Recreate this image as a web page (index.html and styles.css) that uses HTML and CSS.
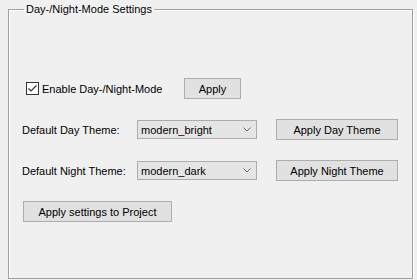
FILE: index.html
```html
<!DOCTYPE html>
<html lang="en">
<head>
  <meta charset="UTF-8" />
  <title>Day-/Night-Mode Settings</title>
  <link rel="stylesheet" href="styles.css">
</head>
<body>

  <fieldset class="group">
    <legend>Day-/Night-Mode Settings</legend>

    <div class="row row-enable">
      <label class="check">
        <span class="box">
          <svg width="11" height="11" viewBox="0 0 11 11"><path d="M1.5 5.5 L4 8 L9.5 2.5" fill="none" stroke="#333" stroke-width="1.2"/></svg>
        </span>
        Enable Day-/Night-Mode
      </label>
      <button class="btn btn-apply">Apply</button>
    </div>

    <div class="row">
      <span class="label">Default Day Theme:</span>
      <div class="combo">
        <span>modern_bright</span>
        <svg width="8" height="5" viewBox="0 0 8 5"><path d="M0.5 0.5 L4 4 L7.5 0.5" fill="none" stroke="#666" stroke-width="1"/></svg>
      </div>
      <button class="btn btn-theme">Apply Day Theme</button>
    </div>

    <div class="row">
      <span class="label">Default Night Theme:</span>
      <div class="combo">
        <span>modern_dark</span>
        <svg width="8" height="5" viewBox="0 0 8 5"><path d="M0.5 0.5 L4 4 L7.5 0.5" fill="none" stroke="#666" stroke-width="1"/></svg>
      </div>
      <button class="btn btn-theme">Apply Night Theme</button>
    </div>

    <div class="row">
      <button class="btn btn-project">Apply settings to Project</button>
    </div>
  </fieldset>

</body>
</html>
```

FILE: styles.css
```css
body {
  margin: 0;
  padding: 3px 0 0 8px;
  background-color: #f0f0f0;
  color: #000;
  font-family: 'Liberation Sans', Arial, sans-serif;
  font-size: 11px;
  line-height: 12px;
}

.group {
  box-sizing: border-box;
  width: 405px;
  height: 276px;
  margin: 0;
  padding: 0 0 0 13px;
  border: 1px solid #a0a0a0;
  box-shadow: 1px 1px 0 #fff, inset 1px 1px 0 #fff;
}

.group legend {
  margin-left: 2px;
  padding: 0 2px;
}

.row {
  display: flex;
  align-items: center;
  height: 21px;
  margin-top: 20px;
}

.row-enable {
  margin-top: 63px;
}

.check {
  display: flex;
  align-items: center;
  width: 162px;
  box-sizing: border-box;
  padding-left: 4px;
}

.box {
  display: flex;
  align-items: center;
  justify-content: center;
  width: 13px;
  height: 13px;
  box-sizing: border-box;
  border: 1px solid #333;
  background: #fff;
  margin-right: 3px;
}

.label {
  width: 115px;
}

.combo {
  display: flex;
  align-items: center;
  justify-content: space-between;
  box-sizing: border-box;
  width: 120px;
  height: 19px;
  padding: 0 5px 0 3px;
  background: #e5e5e5;
  border: 1px solid #acacac;
}

.btn {
  box-sizing: border-box;
  height: 21px;
  padding: 0;
  background: #e1e1e1;
  border: 1px solid #adadad;
  border-radius: 0;
  font: inherit;
  color: #000;
}

.btn-apply {
  width: 57px;
}

.btn-theme {
  width: 122px;
  margin-left: 19px;
}

.btn-project {
  width: 149px;
  margin-left: 1px;
}
```
